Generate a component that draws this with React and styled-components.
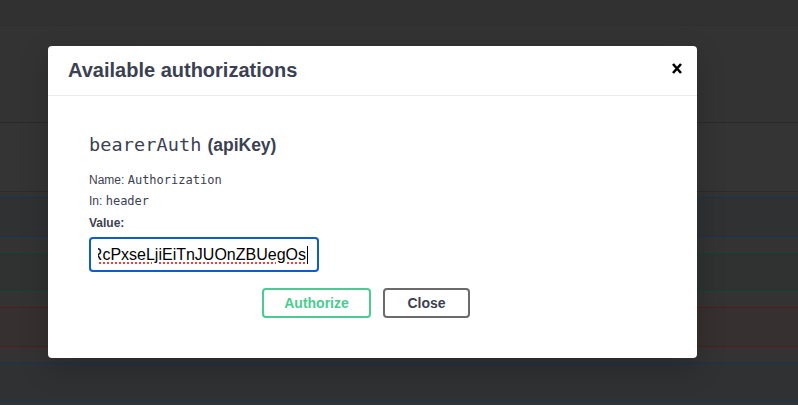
import React from 'react';
import styled, { createGlobalStyle } from 'styled-components';

const GlobalStyle = createGlobalStyle`
  html, body {
    margin: 0;
    padding: 0;
    background: #333333;
  }
  body {
    font-family: "Liberation Sans", Arial, sans-serif;
  }
`;

const Page = styled.div`
  position: relative;
  width: 798px;
  height: 405px;
  overflow: hidden;
  background: #333333;
`;

// dimmed page behind the modal
const Backdrop = styled.div`
  display: flex;
  flex-direction: column;
`;

const TopArea = styled.div`
  height: 25px;
  background: #313131;
  border-bottom: 1px solid #2f2f2f;
`;

const InfoArea = styled.div`
  height: 96px;
  background: #333333;
`;

const SchemeBar = styled.div`
  height: 68px;
  background: #343434;
  border-top: 1px solid #2a2a2a;
  border-bottom: 1px solid #2b2b2b;
  margin-bottom: 5px;
`;

const opColors = {
  get: { fill: '#303133', line: '#1a3550' },
  post: { fill: '#2f3230', line: '#184235' },
  del: { fill: '#363030', line: '#521c1c' },
};

const OpBlock = styled.div`
  height: 40px;
  box-sizing: border-box;
  margin-bottom: 15px;
  background: ${p => opColors[p.$method].fill};
  border-top: 1px solid ${p => opColors[p.$method].line};
  border-bottom: 1px solid ${p => opColors[p.$method].line};
`;

const Modal = styled.div`
  position: absolute;
  left: 48px;
  top: 46px;
  width: 649px;
  background: #ffffff;
  border-radius: 4px;
  box-shadow: 0 10px 30px 0 rgba(0, 0, 0, 0.2);
  color: #3b4151;
`;

const ModalHeader = styled.div`
  height: 50px;
  box-sizing: border-box;
  display: flex;
  align-items: center;
  justify-content: space-between;
  padding: 0 15px 1px 20px;
  border-bottom: 1px solid #ebebeb;
`;

const Title = styled.h3`
  margin: 0;
  font-size: 20px;
  font-weight: 700;
  color: #3b4151;
  line-height: 24px;
`;

const CloseX = styled.button`
  border: none;
  background: none;
  padding: 0;
  margin-top: -4px;
  width: 10px;
  height: 11px;
  display: flex;
  cursor: pointer;
`;

const ModalBody = styled.div`
  padding: 37px 54px 40px 41px;
  display: flex;
  flex-direction: column;
`;

const SchemeName = styled.h4`
  margin: 0;
  height: 24px;
  line-height: 24px;
  display: flex;
  align-items: baseline;
  gap: 6px;
  font-size: 17.5px;
  font-weight: 700;
  color: #3b4151;
`;

const Code = styled.code`
  font-family: "DejaVu Sans Mono", Menlo, monospace;
  font-size: ${p => p.$size || 12}px;
  font-weight: 400;
  letter-spacing: ${p => p.$spacing || 0}px;
`;

const InfoLine = styled.p`
  margin: ${p => p.$gap}px 0 0;
  font-size: 12px;
  line-height: 16px;
  color: #3b4151;
`;

const Label = styled.label`
  margin-top: 6px;
  font-size: 12px;
  line-height: 16px;
  font-weight: 700;
  color: #3b4151;
`;

const Field = styled.div`
  margin-top: 6px;
  width: 230px;
  height: 35px;
  box-sizing: border-box;
  border: 2px solid #0e5ccd;
  border-radius: 4px;
  padding: 0 9px 0 7px;
  display: flex;
  align-items: center;
`;

const Clip = styled.div`
  flex: 1;
  overflow: hidden;
  display: flex;
  justify-content: flex-end;
  align-items: center;
  height: 24px;
`;

const Token = styled.span`
  flex-shrink: 0;
  white-space: nowrap;
  font-family: "Liberation Sans", Arial, sans-serif;
  font-size: 16px;
  color: #000;
  text-decoration: underline dotted #e5453d;
  text-decoration-thickness: 1.5px;
  text-underline-offset: 3px;
`;

const Caret = styled.span`
  flex-shrink: 0;
  width: 1px;
  height: 18px;
  margin-left: 1px;
  background: #000;
`;

const ButtonRow = styled.div`
  margin-top: 16px;
  display: flex;
  justify-content: center;
  gap: 12px;
`;

const Button = styled.button`
  width: ${p => p.$w}px;
  height: 30px;
  box-sizing: border-box;
  background: #fff;
  border: 2px solid ${p => (p.$primary ? '#49cc90' : '#6b6b6b')};
  border-radius: 4px;
  color: ${p => (p.$primary ? '#49cc90' : '#3b4151')};
  font-family: "Liberation Sans", Arial, sans-serif;
  font-size: 14px;
  font-weight: 700;
  padding: 0;
  cursor: pointer;
`;

export default function App() {
  return (
    <Page>
      <GlobalStyle />
      <Backdrop>
        <TopArea />
        <InfoArea />
        <SchemeBar />
        <OpBlock $method="get" />
        <OpBlock $method="post" />
        <OpBlock $method="del" />
        <OpBlock $method="get" />
      </Backdrop>

      <Modal role="dialog">
        <ModalHeader>
          <Title>Available authorizations</Title>
          <CloseX aria-label="Close">
            <svg width="10" height="11" viewBox="0 0 10 11">
              <path d="M1 1 L9 10 M9 1 L1 10" stroke="#000" strokeWidth="2.6" />
            </svg>
          </CloseX>
        </ModalHeader>
        <ModalBody>
          <SchemeName>
            <Code $size={18.5} $spacing={0.1}>bearerAuth</Code>
            <span>(apiKey)</span>
          </SchemeName>
          <InfoLine $gap={15}>
            Name: <Code>Authorization</Code>
          </InfoLine>
          <InfoLine $gap={5}>
            In: <Code>header</Code>
          </InfoLine>
          <Label>Value:</Label>
          <Field>
            <Clip>
              <Token>eyJhbGciOiJIUzI1NiJ9RcPxseLjiEiTnJUOnZBUegOs</Token>
              <Caret />
            </Clip>
          </Field>
          <ButtonRow>
            <Button $primary $w={109}>Authorize</Button>
            <Button $w={87}>Close</Button>
          </ButtonRow>
        </ModalBody>
      </Modal>
    </Page>
  );
}
